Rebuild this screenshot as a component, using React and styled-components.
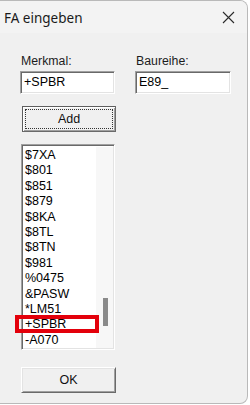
import React from "react";
import styled, { createGlobalStyle } from "styled-components";

const Global = createGlobalStyle`
  html, body {
    margin: 0;
    padding: 0;
    background: #ffffff;
  }
  body {
    font-family: "Liberation Sans", Arial, sans-serif;
  }
`;

const Window = styled.div`
  width: 247px;
  height: 402px;
  background: #f0f0f0;
  border: 1px solid #b9b9b9;
  border-left: none;
  border-radius: 0 8px 8px 0;
  overflow: hidden;
  display: flex;
  flex-direction: column;
`;

const TitleBar = styled.div`
  height: 32px;
  flex: none;
  display: flex;
  align-items: center;
  justify-content: space-between;
  padding: 0 12px 0 4px;
  background: #f3f3f3;
`;

const Title = styled.span`
  font-family: "Noto Sans", "Open Sans", sans-serif;
  font-size: 13.5px;
  color: #1a1a1a;
  margin-top: 1px;
`;

const Close = styled.div`
  width: 14px;
  height: 14px;
  display: flex;
  align-items: center;
  justify-content: center;
`;

const Body = styled.div`
  padding: 21px 0 0 20px;
  display: flex;
  flex-direction: column;
`;

const Fields = styled.div`
  display: grid;
  grid-template-columns: 95px 96px;
  column-gap: 20px;
`;

const Field = styled.div`
  display: flex;
  flex-direction: column;
`;

const Label = styled.label`
  font-size: 12.3px;
  color: #1c1c1c;
  line-height: 15px;
  padding-left: 1px;
  margin-bottom: 2px;
`;

const Input = styled.div`
  height: 23px;
  box-sizing: border-box;
  background: #ffffff;
  border-style: solid;
  border-width: 1px;
  border-color: #a0a0a0 #ffffff #ffffff #a0a0a0;
  box-shadow: inset 1px 1px 0 #696969, inset -1px -1px 0 #e3e3e3;
  font-size: 12.5px;
  color: #000;
  line-height: 21px;
  padding-left: 3px;
`;

const Button = styled.div`
  box-sizing: border-box;
  width: ${(p) => p.$w}px;
  height: 26px;
  margin-left: ${(p) => p.$ml}px;
  background: #f0f0f0;
  border: 1px solid ${(p) => (p.$default ? "#5e5e5e" : "#ffffff")};
  border-right-color: #6a6a6a;
  border-bottom-color: #6a6a6a;
  box-shadow: ${(p) =>
    p.$default
      ? "inset 1px 1px 0 #ffffff, inset -1px -1px 0 #a0a0a0"
      : "inset 1px 1px 0 #e3e3e3, inset -1px -1px 0 #a0a0a0"};
  display: flex;
  align-items: center;
  justify-content: center;
  padding: 2px;
  font-size: 12.5px;
  color: #111;
`;

const Focus = styled.div`
  flex: 1;
  align-self: stretch;
  border: 1px dotted #333;
  display: flex;
  align-items: center;
  justify-content: center;
`;

const List = styled.div`
  position: relative;
  margin-top: 12px;
  margin-left: 1px;
  width: 94px;
  height: 206px;
  box-sizing: border-box;
  background: #ffffff;
  border-style: solid;
  border-width: 1px;
  border-color: #a0a0a0 #ffffff #ffffff #a0a0a0;
  box-shadow: inset 1px 1px 0 #696969, inset -1px -1px 0 #e3e3e3;
  display: flex;
  padding: 2px 1px 1px 2px;
`;

const Items = styled.div`
  flex: 1;
  padding-top: 1px;
`;

const Item = styled.div`
  font-size: 12.5px;
  line-height: 15.4px;
  height: 15.4px;
  padding-left: 1px;
  color: #000;
  white-space: nowrap;
`;

const Track = styled.div`
  width: 17px;
  background: #f7f7f7;
  display: flex;
  flex-direction: column;
  align-items: center;
  padding-top: 151px;
`;

const Thumb = styled.div`
  width: 5px;
  height: 28px;
  background: #8a8a8a;
  margin-left: 1px;
`;

const Highlight = styled.div`
  position: absolute;
  left: -7px;
  top: 170px;
  width: 84px;
  height: 18px;
  box-sizing: border-box;
  border: 4px solid #e3000b;
  pointer-events: none;
`;

const items = [
  "$7XA",
  "$801",
  "$851",
  "$879",
  "$8KA",
  "$8TL",
  "$8TN",
  "$981",
  "%0475",
  "&PASW",
  "*LM51",
  "+SPBR",
  "-A070",
];

export default function App() {
  return (
    <>
      <Global />
      <Window>
        <TitleBar>
          <Title>FA eingeben</Title>
          <Close>
            <svg width="13" height="13" viewBox="0 0 13 13">
              <path d="M1 1 L12 12 M12 1 L1 12" stroke="#2b2b2b" strokeWidth="1.1" />
            </svg>
          </Close>
        </TitleBar>
        <Body>
          <Fields>
            <Field>
              <Label>Merkmal:</Label>
              <Input>+SPBR</Input>
            </Field>
            <Field>
              <Label>Baureihe:</Label>
              <Input>E89_</Input>
            </Field>
          </Fields>
          <div style={{ marginTop: 12 }}>
            <Button $w={94} $ml={2} $default>
              <Focus>Add</Focus>
            </Button>
          </div>
          <List>
            <Items>
              {items.map((t) => (
                <Item key={t}>{t}</Item>
              ))}
            </Items>
            <Track>
              <Thumb />
            </Track>
            <Highlight />
          </List>
          <div style={{ marginTop: 17 }}>
            <Button $w={95} $ml={1}>
              OK
            </Button>
          </div>
        </Body>
      </Window>
    </>
  );
}
